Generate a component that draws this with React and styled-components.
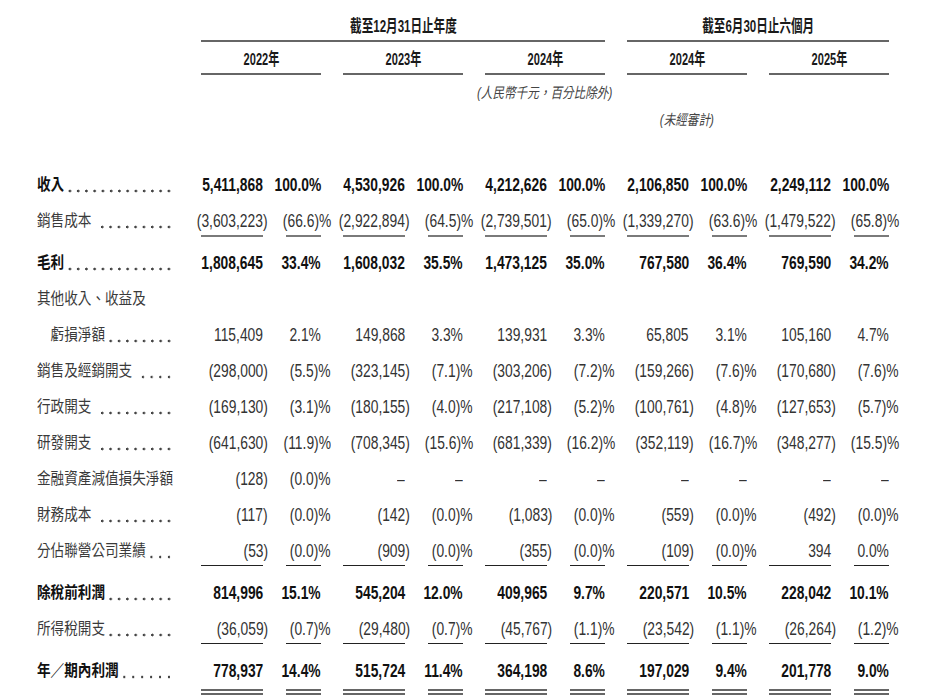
import styled, { createGlobalStyle } from 'styled-components';

const GlobalStyle = createGlobalStyle`
  html, body {
    margin: 0;
    padding: 0;
    background: #fff;
  }
  body {
    font-family: "Liberation Sans", "Noto Sans CJK TC", sans-serif;
    color: #222;
  }
`;

const Page = styled.div`
  width: 926px;
  height: 699px;
  overflow: hidden;
  box-sizing: border-box;
  padding: 17px 0 0 37px;
`;

const Grid = styled.div`
  display: grid;
  grid-template-columns: 142px repeat(5, 120px);
  column-gap: 22px;
`;

const Squeeze = styled.span`
  display: inline-block;
  white-space: nowrap;
  transform: scaleX(${({ $x }) => $x});
  transform-origin: center;
`;

const HeadCell = styled.div`
  grid-column: ${({ $col }) => $col} / span ${({ $span }) => $span || 1};
  grid-row: ${({ $row }) => $row};
  display: flex;
  justify-content: center;
  font-size: 17px;
  font-weight: 700;
  line-height: 20px;
  color: #1a1a1a;
  padding-bottom: 3px;
  margin-top: ${({ $top }) => $top || 0}px;
  border-bottom: 2px solid #666;
`;

const Note = styled.div`
  grid-column: ${({ $col }) => $col};
  grid-row: ${({ $row }) => $row};
  display: flex;
  justify-content: center;
  font-size: 14.5px;
  font-style: italic;
  line-height: 20px;
  color: #444;
  margin-top: ${({ $top }) => $top}px;
`;

const Body = styled.div`
  margin-top: 37px;
`;

const Row = styled(Grid)`
  height: 36px;
  align-items: start;
  margin-bottom: ${({ $after }) => ($after ? 6 : 0)}px;
`;

const LabelCell = styled.div`
  height: 36px;
  display: flex;
  align-items: center;
`;

const LabelInner = styled.div`
  flex: none;
  width: 160px;
  box-sizing: border-box;
  display: flex;
  align-items: center;
  padding-left: ${({ $indent }) => ($indent ? 16 : 0)}px;
  transform: scaleX(0.85);
  transform-origin: left center;
  font-size: 16px;
  line-height: 20px;
  white-space: nowrap;
  font-weight: ${({ $bold }) => ($bold ? 700 : 400)};
  color: ${({ $bold }) => ($bold ? '#111' : '#3a3a3a')};
`;

const Leader = styled.span`
  flex: 1;
  height: 4px;
  margin: 12px 0 0 ${({ $space }) => ($space ? 8 : 2)}px;
  background-image: radial-gradient(circle, #444 1.2px, transparent 1.7px);
  background-size: 9.4px 4px;
  background-repeat: space no-repeat;
  background-position: center;
`;

const Pair = styled.div`
  display: grid;
  grid-template-columns: 62px 35px;
  column-gap: 23px;
`;

const rules = {
  none: 'none',
  gray: '2px solid #7a7a7a',
  dark: '1px solid #222',
  double: '6px double #666',
};

const Cell = styled.div`
  display: flex;
  justify-content: flex-end;
  margin-top: 4px;
  height: ${({ $rule }) => ($rule === 'double' ? 32 : 28)}px;
  line-height: 28px;
  white-space: nowrap;
  border-bottom: ${({ $rule }) => rules[$rule]};
`;

const Num = styled.span`
  display: inline-block;
  font-size: 17.5px;
  font-weight: ${({ $bold }) => ($bold ? 700 : 400)};
  color: ${({ $bold }) => ($bold ? '#111' : '#333')};
  transform: scaleX(0.79);
  transform-origin: right center;
  margin-right: ${({ $hang }) => -$hang}px;
`;

const D = ['–', '–'];

const rows = [
  {
    label: '收入', bold: true,
    values: [['5,411,868', '100.0%'], ['4,530,926', '100.0%'], ['4,212,626', '100.0%'], ['2,106,850', '100.0%'], ['2,249,112', '100.0%']],
  },
  {
    label: '銷售成本', space: true, rule: 'gray', after: true,
    values: [['(3,603,223)', '(66.6)%'], ['(2,922,894)', '(64.5)%'], ['(2,739,501)', '(65.0)%'], ['(1,339,270)', '(63.6)%'], ['(1,479,522)', '(65.8)%']],
  },
  {
    label: '毛利', bold: true,
    values: [['1,808,645', '33.4%'], ['1,608,032', '35.5%'], ['1,473,125', '35.0%'], ['767,580', '36.4%'], ['769,590', '34.2%']],
  },
  { label: '其他收入、收益及', noDots: true, values: null },
  {
    label: '虧損淨額', indent: true,
    values: [['115,409', '2.1%'], ['149,868', '3.3%'], ['139,931', '3.3%'], ['65,805', '3.1%'], ['105,160', '4.7%']],
  },
  {
    label: '銷售及經銷開支', space: true,
    values: [['(298,000)', '(5.5)%'], ['(323,145)', '(7.1)%'], ['(303,206)', '(7.2)%'], ['(159,266)', '(7.6)%'], ['(170,680)', '(7.6)%']],
  },
  {
    label: '行政開支', space: true,
    values: [['(169,130)', '(3.1)%'], ['(180,155)', '(4.0)%'], ['(217,108)', '(5.2)%'], ['(100,761)', '(4.8)%'], ['(127,653)', '(5.7)%']],
  },
  {
    label: '研發開支', space: true,
    values: [['(641,630)', '(11.9)%'], ['(708,345)', '(15.6)%'], ['(681,339)', '(16.2)%'], ['(352,119)', '(16.7)%'], ['(348,277)', '(15.5)%']],
  },
  {
    label: '金融資產減值損失淨額', noDots: true,
    values: [['(128)', '(0.0)%'], D, D, D, D],
  },
  {
    label: '財務成本', space: true,
    values: [['(117)', '(0.0)%'], ['(142)', '(0.0)%'], ['(1,083)', '(0.0)%'], ['(559)', '(0.0)%'], ['(492)', '(0.0)%']],
  },
  {
    label: '分佔聯營公司業績', rule: 'dark', after: true,
    values: [['(53)', '(0.0)%'], ['(909)', '(0.0)%'], ['(355)', '(0.0)%'], ['(109)', '(0.0)%'], ['394', '0.0%']],
  },
  {
    label: '除稅前利潤', bold: true,
    values: [['814,996', '15.1%'], ['545,204', '12.0%'], ['409,965', '9.7%'], ['220,571', '10.5%'], ['228,042', '10.1%']],
  },
  {
    label: '所得稅開支', rule: 'dark', after: true,
    values: [['(36,059)', '(0.7)%'], ['(29,480)', '(0.7)%'], ['(45,767)', '(1.1)%'], ['(23,542)', '(1.1)%'], ['(26,264)', '(1.2)%']],
  },
  {
    label: '年／期內利潤', bold: true, rule: 'double',
    values: [['778,937', '14.4%'], ['515,724', '11.4%'], ['364,198', '8.6%'], ['197,029', '9.4%'], ['201,778', '9.0%']],
  },
];

function hangOf(text) {
  if (text.endsWith(')%')) return 10;
  if (text.endsWith(')')) return 5;
  return 0;
}

function DataRow({ row }) {
  const rule = row.rule || 'none';
  return (
    <Row $after={row.after}>
      <LabelCell>
        <LabelInner $bold={row.bold} $indent={row.indent}>
          {row.label}
          {!row.noDots && <Leader $space={row.space} />}
        </LabelInner>
      </LabelCell>
      {row.values &&
        row.values.map(([amount, pct], i) => (
          <Pair key={i}>
            <Cell $rule={rule}>
              <Num $bold={row.bold} $hang={hangOf(amount)}>{amount}</Num>
            </Cell>
            <Cell $rule={rule}>
              <Num $bold={row.bold} $hang={hangOf(pct)}>{pct}</Num>
            </Cell>
          </Pair>
        ))}
    </Row>
  );
}

const years = ['2022年', '2023年', '2024年', '2024年', '2025年'];

export default function App() {
  return (
    <>
      <GlobalStyle />
      <Page>
        <Grid>
          <HeadCell $col={2} $span={3} $row={1}>
            <Squeeze $x={0.68}>截至12月31日止年度</Squeeze>
          </HeadCell>
          <HeadCell $col={5} $span={2} $row={1}>
            <Squeeze $x={0.68}>截至6月30日止六個月</Squeeze>
          </HeadCell>
          {years.map((y, i) => (
            <HeadCell key={i} $col={i + 2} $row={2} $top={8}>
              <Squeeze $x={0.65}>{y}</Squeeze>
            </HeadCell>
          ))}
          <Note $col={4} $row={3} $top={8}>
            <Squeeze $x={0.8}>(人民幣千元，百分比除外)</Squeeze>
          </Note>
          <Note $col={5} $row={4} $top={7}>
            <Squeeze $x={0.8}>(未經審計)</Squeeze>
          </Note>
        </Grid>
        <Body>
          {rows.map((row, i) => (
            <DataRow key={i} row={row} />
          ))}
        </Body>
      </Page>
    </>
  );
}
